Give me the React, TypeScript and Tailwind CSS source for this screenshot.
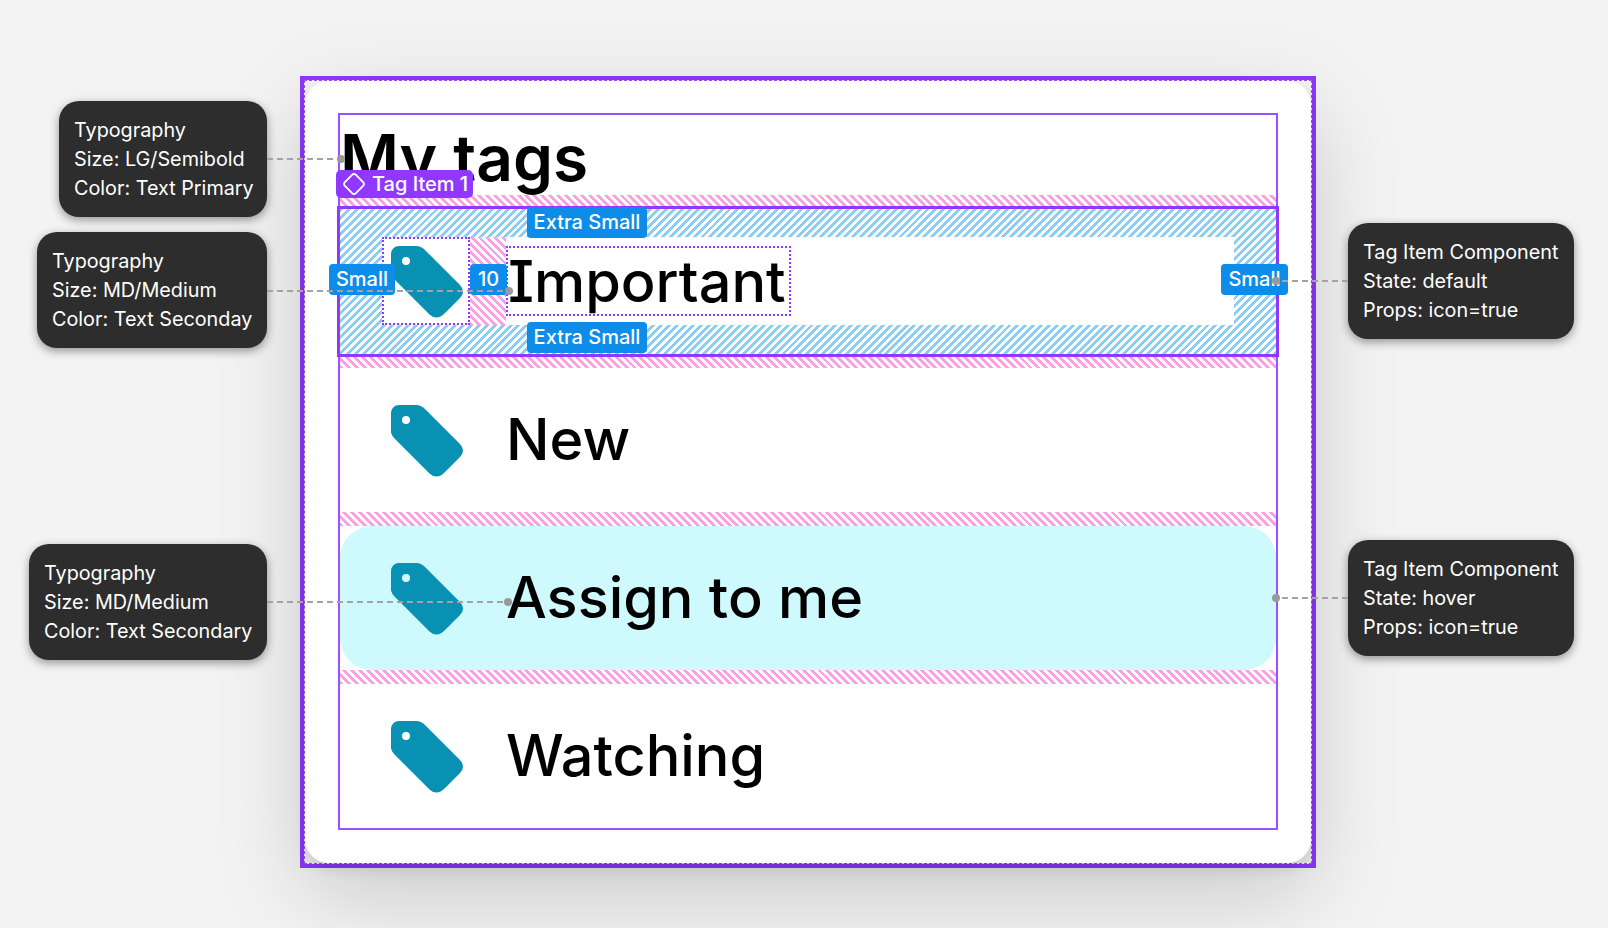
import { Diamond } from "lucide-react";

const pinkStripes =
  "bg-[repeating-linear-gradient(45deg,#ff9fe3_0,#ff9fe3_2.8px,#ffffff_2.8px,#ffffff_5.6px)]";
const blueStripes =
  "bg-[repeating-linear-gradient(-45deg,#8bcdf5_0,#8bcdf5_2.8px,#ffffff_2.8px,#ffffff_5.6px)]";
const dashes =
  "h-[2px] bg-[repeating-linear-gradient(90deg,#a3a3a3_0,#a3a3a3_6px,transparent_6px,transparent_10px)]";

function TagIcon() {
  return (
    <svg width="72" height="72" viewBox="0 0 72 72" className="text-[#0891b2]">
      <path
        fill="currentColor"
        fillRule="evenodd"
        d="M0 8a8 8 0 0 1 8-8h17q5 0 9 4l34.500 34.500q3.500 3.500 3.500 7t-3 6.500l-15 15q-4.500 4.500-8.500 4.500t-7-3l-35-35q-4-4-4-10zM15 11a4 4 0 1 0 0 8a4 4 0 0 0 0-8z"
      />
    </svg>
  );
}

function Gap() {
  return <div className={`h-[14px] shrink-0 ${pinkStripes}`} />;
}

function TagRow({ label, hover }: { label: string; hover?: boolean }) {
  return (
    <div className={`h-[144px] shrink-0 px-[42px] py-[28px] ${hover ? "rounded-[32px] bg-cyan-100" : ""}`}>
      <div className="flex h-[88px] items-center">
        <div className="flex h-[88px] w-[124px] shrink-0 items-center justify-center pt-[2px] pr-[34px]">
          <TagIcon />
        </div>
        <div className="h-[70px] text-[57.6px] leading-[68px] font-medium text-black">{label}</div>
      </div>
    </div>
  );
}

// the row with the inspector overlay on it: spacing hatches and size labels
function MarkedRow() {
  return (
    <div className={`relative h-[145px] shrink-0 px-[42px] pt-[28px] outline-3 outline-[#9038ff] ${blueStripes}`}>
      <div className="flex h-[88px] items-center bg-white">
        <div className="flex h-[88px] w-[88px] shrink-0 items-center justify-center border-2 border-dotted border-[#9038ff] pt-[2px] pl-[2px]">
          <TagIcon />
        </div>
        <div className={`h-[88px] w-[36px] shrink-0 ${pinkStripes}`} />
        <div className="h-[70px] border-2 border-dotted border-[#9038ff] pr-[3px] text-[57.6px] leading-[66px] font-medium text-black [font-feature-settings:'cv08']">
          Important
        </div>
      </div>
      <div className="absolute -top-[39px] -left-[4px] flex h-[28px] w-[137px] items-center gap-[6px] rounded-[5px] bg-[#9038ff] pl-[6px] text-[20px] font-medium text-white">
        <Diamond size={24} strokeWidth={1.8} />
        Tag Item 1
      </div>
      <Size className="-top-[2px] left-[187px] w-[120px]" text="Extra Small" />
      <Size className="top-[113px] left-[187px] w-[120px]" text="Extra Small" />
      <Size className="top-[55px] -left-[11px] w-[66px]" text="Small" />
      <Size className="top-[55px] left-[130px] w-[37px]" text="10" />
      <Size className="top-[55px] left-[881px] w-[67px]" text="Small" />
    </div>
  );
}

function Size({ className, text }: { className: string; text: string }) {
  return (
    <div
      className={`absolute flex h-[31px] items-center justify-center rounded-[4px] bg-[#0d8ce9] pb-[1px] text-[20px] font-medium text-white ${className}`}
    >
      {text}
    </div>
  );
}

function Note({ lines, className, leader }: { lines: string[]; className?: string; leader: string }) {
  return (
    <div
      className={`relative h-[116px] rounded-[20px] bg-[#2d2d2d] px-[15px] py-[15px] text-[19.8px] leading-[29px] whitespace-nowrap text-white shadow-[0_3px_10px_rgba(0,0,0,0.4)] ${className ?? ""}`}
    >
      {lines.map((l) => (
        <div key={l}>{l}</div>
      ))}
      <div className={`absolute ${dashes} ${leader}`} />
    </div>
  );
}

export default function App() {
  return (
    <div className="flex h-[928px] w-[1608px] overflow-hidden bg-[#f3f3f3] font-['Inter',sans-serif]">
      <div className="relative z-10 flex w-[267px] shrink-0 flex-col items-end pt-[101px]">
        <Note
          className="w-[208px]"
          leader="top-[57px] left-full w-[78px] after:absolute after:-top-[3px] after:right-0 after:h-[8px] after:w-[8px] after:rounded-full after:bg-[#9a9a9a]"
          lines={["Typography", "Size: LG/Semibold", "Color: Text Primary"]}
        />
        <Note
          className="mt-[15px] w-[230px]"
          leader="top-[58px] left-full w-[246px] after:absolute after:-top-[3px] after:right-0 after:h-[8px] after:w-[8px] after:rounded-full after:bg-[#9a9a9a]"
          lines={["Typography", "Size: MD/Medium", "Color: Text Seconday"]}
        />
        <Note
          className="mt-[196px] w-[238px]"
          leader="top-[57px] left-full w-[245px] after:absolute after:-top-[3px] after:right-0 after:h-[8px] after:w-[8px] after:rounded-full after:bg-[#9a9a9a]"
          lines={["Typography", "Size: MD/Medium", "Color: Text Secondary"]}
        />
      </div>

      <div className="mt-[76px] ml-[33px] h-[792px] w-[1016px] shrink-0 border-[4px] border-[#9038ff]">
        <div className="h-full border border-dashed border-[#9d50ff]">
          <div className="h-full rounded-[24px] bg-white pt-[32px] pl-[33px] shadow-[0_8px_12px_rgba(0,0,0,0.07),0_30px_90px_rgba(0,0,0,0.18)]">
            <div className="flex h-[717px] w-[940px] flex-col border-2 border-[#9d50ff]">
              <div className="h-[80px] shrink-0 text-[64px] leading-[86px] font-semibold text-black">My tags</div>
              <Gap />
              <MarkedRow />
              <Gap />
              <TagRow label="New" />
              <Gap />
              <TagRow label="Assign to me" hover />
              <Gap />
              <TagRow label="Watching" />
            </div>
          </div>
        </div>
      </div>

      <div className="relative z-10 ml-[32px] flex w-[226px] shrink-0 flex-col gap-[201px] pt-[223px]">
        <Note
          leader="top-[57px] right-full w-[76px] after:absolute after:-top-[3px] after:left-0 after:h-[8px] after:w-[8px] after:rounded-full after:bg-[#9a9a9a]"
          lines={["Tag Item Component", "State: default", "Props: icon=true"]}
        />
        <Note
          leader="top-[57px] right-full w-[76px] after:absolute after:-top-[3px] after:left-0 after:h-[8px] after:w-[8px] after:rounded-full after:bg-[#9a9a9a]"
          lines={["Tag Item Component", "State: hover", "Props: icon=true"]}
        />
      </div>
    </div>
  );
}
